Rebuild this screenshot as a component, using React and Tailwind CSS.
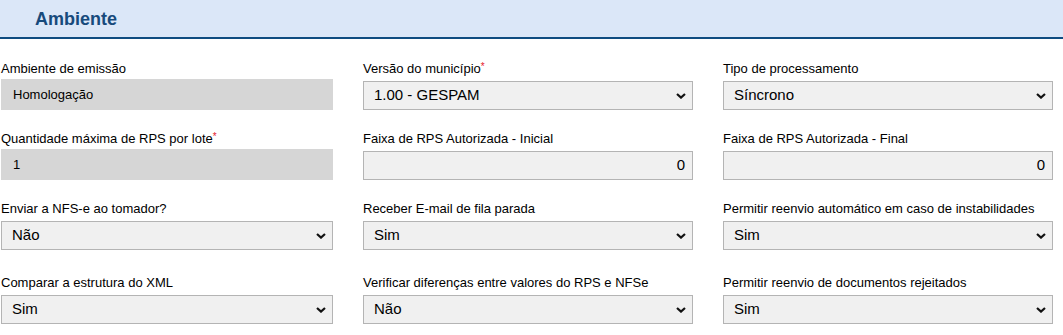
const rows = [
  {
    gap: "mt-[22px]",
    fields: [
      { label: "Ambiente de emissão", type: "readonly", value: "Homologação" },
      { label: "Versão do município", required: true, type: "select", value: "1.00 - GESPAM" },
      { label: "Tipo de processamento", type: "select", value: "Síncrono" },
    ],
  },
  {
    gap: "mt-[21px]",
    fields: [
      { label: "Quantidade máxima de RPS por lote", required: true, type: "readonly", value: "1" },
      { label: "Faixa de RPS Autorizada - Inicial", type: "number", value: "0" },
      { label: "Faixa de RPS Autorizada - Final", type: "number", value: "0" },
    ],
  },
  {
    gap: "mt-[21px]",
    fields: [
      { label: "Enviar a NFS-e ao tomador?", type: "select", value: "Não" },
      { label: "Receber E-mail de fila parada", type: "select", value: "Sim" },
      { label: "Permitir reenvio automático em caso de instabilidades", type: "select", value: "Sim" },
    ],
  },
  {
    gap: "mt-[25px]",
    fields: [
      { label: "Comparar a estrutura do XML", type: "select", value: "Sim" },
      { label: "Verificar diferenças entre valores do RPS e NFSe", type: "select", value: "Não" },
      { label: "Permitir reenvio de documentos rejeitados", type: "select", value: "Sim" },
    ],
  },
];

const Chevron = () => (
  <svg width="10" height="6" viewBox="0 0 10 6" className="absolute right-[6px] top-1/2 -translate-y-1/2">
    <path d="M1 1 L5 4.6 L9 1" fill="none" stroke="#111" strokeWidth="2.2" />
  </svg>
);

const Field = ({ field }) => {
  return (
    <div className="flex flex-col">
      <label className="text-[13px] leading-[15px] mb-[3px] text-black">
        {field.label}
        {field.required && (
          <span className="relative top-[1px] text-[#e4202c] text-[10px] align-top leading-none">*</span>
        )}
      </label>
      <div className="h-[31px] flex flex-col">
        {field.type === "readonly" && (
          <div className="h-[31px] bg-[#d6d6d6] pl-[12px] flex items-center text-[13px] text-black">
            {field.value}
          </div>
        )}
        {field.type === "select" && (
          <div className="relative mt-[2px] h-[29px] bg-[#f0f0f0] border border-[#b4b4b4] pl-[10px] flex items-center text-[15px] text-black">
            {field.value}
            <Chevron />
          </div>
        )}
        {field.type === "number" && (
          <div className="mt-[2px] h-[29px] bg-[#f0f0f0] border border-[#b4b4b4] pr-[7px] flex items-center justify-end text-[15px] text-black">
            {field.value}
          </div>
        )}
      </div>
    </div>
  );
};

export default function App() {
  return (
    <div className="w-[1063px] h-[335px] bg-white overflow-hidden" style={{ fontFamily: '"Liberation Sans", Arial, sans-serif' }}>
      <div className="h-[39px] bg-[#dbe7f8] border-b-2 border-[#0f4c81] flex items-center pl-[35px]">
        <h2 className="text-[18px] font-bold text-[#174a7c] leading-none mt-[1px]">Ambiente</h2>
      </div>
      <div className="pl-px">
        {rows.map((row, i) => (
          <div key={i} className={`grid grid-cols-[332px_330px_330px] gap-x-[30px] ${row.gap}`}>
            {row.fields.map((f, j) => (
              <Field key={j} field={f} />
            ))}
          </div>
        ))}
      </div>
    </div>
  );
}
